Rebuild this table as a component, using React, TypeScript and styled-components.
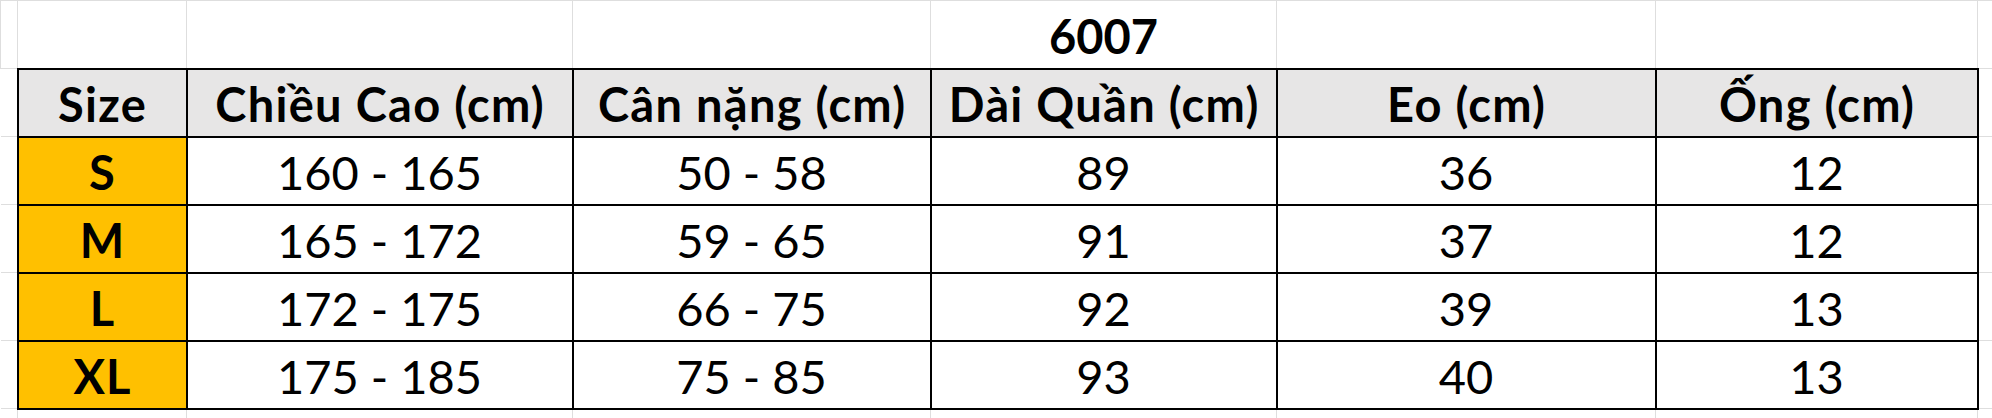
import React from "react";
import styled, { createGlobalStyle, css } from "styled-components";

const Global = createGlobalStyle`
  html, body { margin: 0; padding: 0; background: #ffffff; }
  body { font-family: Lato, "Open Sans", sans-serif; }
`;

const GRID = "#dedede";
const INK = "#000000";

const Sheet = styled.table`
  width: 1992px;
  table-layout: fixed;
  border-collapse: collapse;
  font-family: Lato, "Noto Sans", sans-serif;
  color: ${INK};
`;

const Row = styled.tr<{ $h: number }>`
  height: ${(p) => p.$h}px;
`;

type Kind = "blank" | "title" | "head" | "size" | "data";

const Cell = styled.td<{ $kind: Kind; $top?: boolean }>`
  padding: 0 0 3px 0;
  text-align: center;
  vertical-align: bottom;
  font-size: 47px;
  line-height: 1.2;
  white-space: nowrap;
  overflow: hidden;
  border: 1px solid ${GRID};
  border-left: ${(p) => (p.$top || p.$kind !== "blank" ? `1px solid ${GRID}` : "none")};
  ${(p) => p.$top && css`border-top: 1px solid ${GRID};`}
  ${(p) =>
    p.$kind === "title" &&
    css`
      font-weight: 700;
    `}
  ${(p) =>
    (p.$kind === "head" || p.$kind === "size" || p.$kind === "data") &&
    css`
      border: 2px solid ${INK};
    `}
  ${(p) =>
    p.$kind === "head" &&
    css`
      background: #e7e6e6;
      font-weight: 700;
      letter-spacing: 1.3px;
      text-indent: 1.3px;
    `}
  ${(p) =>
    p.$kind === "size" &&
    css`
      background: #ffc000;
      font-weight: 700;
      letter-spacing: 1px;
      text-indent: 1px;
    `}
  ${(p) =>
    p.$kind === "data" &&
    css`
      background: #ffffff;
      font-weight: 400;
    `}
`;

const widths = [17, 169, 386, 358, 346, 379, 322, 15];

const headers = [
  "Size",
  "Chiều Cao (cm)",
  "Cân nặng (cm)",
  "Dài Quần (cm)",
  "Eo (cm)",
  "Ống (cm)",
];

const rows = [
  ["S", "160 - 165", "50 - 58", "89", "36", "12"],
  ["M", "165 - 172", "59 - 65", "91", "37", "12"],
  ["L", "172 - 175", "66 - 75", "92", "39", "13"],
  ["XL", "175 - 185", "75 - 85", "93", "40", "13"],
];

export default function App() {
  return (
    <>
      <Global />
      <Sheet>
        <colgroup>
          {widths.map((w, i) => (
            <col key={i} style={{ width: w }} />
          ))}
        </colgroup>
        <tbody>
          <Row $h={68}>
            <Cell $kind="blank" $top />
            <Cell $kind="blank" $top />
            <Cell $kind="blank" $top />
            <Cell $kind="blank" $top />
            <Cell $kind="title" $top>6007</Cell>
            <Cell $kind="blank" $top />
            <Cell $kind="blank" $top />
            <Cell $kind="blank" $top />
          </Row>
          <Row $h={68}>
            <Cell $kind="blank" />
            {headers.map((h) => (
              <Cell key={h} $kind="head">
                {h}
              </Cell>
            ))}
            <Cell $kind="blank" />
          </Row>
          {rows.map((r) => (
            <Row key={r[0]} $h={68}>
              <Cell $kind="blank" />
              {r.map((v, i) => (
                <Cell key={i} $kind={i === 0 ? "size" : "data"}>
                  {v}
                </Cell>
              ))}
              <Cell $kind="blank" />
            </Row>
          ))}
          <Row $h={10}>
            {widths.map((_, i) => (
              <Cell key={i} $kind="blank" />
            ))}
          </Row>
        </tbody>
      </Sheet>
    </>
  );
}
